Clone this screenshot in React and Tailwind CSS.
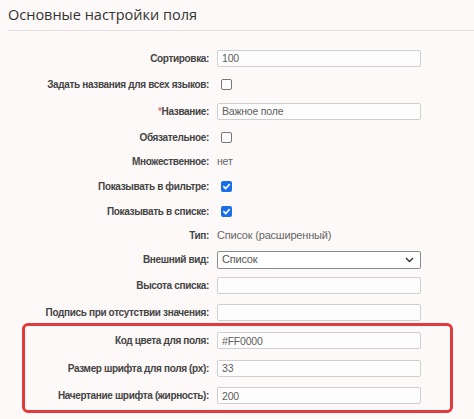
import React from "react";

const baseFont = { fontFamily: '"Liberation Sans", Arial, sans-serif' };

function TextInput({ value }) {
  return (
    <div className="w-[204px] h-[17px] border border-[#cfcfcf] bg-[#fefdfd] rounded-[2px] flex items-center pl-[4px] text-[10.5px] tracking-[-0.2px] text-[#5e5e5e] leading-none">
      {value}
    </div>
  );
}

function Checkbox({ checked }) {
  if (checked) {
    return (
      <div className="ml-[4px] w-[11px] h-[11px] rounded-[2px] bg-[#1a6ee8] flex items-center justify-center">
        <svg width="9" height="9" viewBox="0 0 10 10">
          <path d="M2 5.2 L4.2 7.3 L8.2 2.8" fill="none" stroke="white" strokeWidth="1.8" strokeLinecap="round" strokeLinejoin="round" />
        </svg>
      </div>
    );
  }
  return <div className="ml-[4px] w-[11px] h-[11px] rounded-[2px] border border-[#767676] bg-white" />;
}

function Select({ value }) {
  return (
    <div className="w-[204px] h-[18px] border border-[#8a8a8a] bg-white rounded-[2px] flex items-center justify-between pl-[4px] pr-[6px] text-[11px] tracking-[-0.2px] text-[#555] leading-none">
      <span>{value}</span>
      <svg width="9" height="6" viewBox="0 0 9 6">
        <path d="M1 1 L4.5 4.5 L8 1" fill="none" stroke="#333" strokeWidth="1.4" />
      </svg>
    </div>
  );
}

function Label({ label, required, className }) {
  return (
    <div className={className + " text-right pr-[8px] text-[10px] tracking-[-0.35px] font-bold text-[#444] whitespace-nowrap"}>
      {required && <span className="text-[#e0433c] font-normal">*</span>}
      {label}:
    </div>
  );
}

function Row({ label, required, h, children }) {
  return (
    <div className={h + " flex items-center"}>
      <Label label={label} required={required} className="w-[217px]" />
      {children}
    </div>
  );
}

function BoxRow({ label, children }) {
  return (
    <div className="h-[27.5px] flex items-center">
      <Label label={label} className="w-[192px]" />
      {children}
    </div>
  );
}

export default function App() {
  return (
    <div className="w-[474px] h-[419px] overflow-hidden bg-[#fcf9f8]" style={baseFont}>
      <div className="ml-[8px] h-[31px] border-b border-[#e6e2e1] flex items-center">
        <h1 className="text-[14.5px] text-[#333] leading-none pt-[1px]" style={{ fontFamily: '"Open Sans", sans-serif' }}>
          Основные настройки поля
        </h1>
      </div>
      <div className="pt-[14px]">
        <Row h="h-[26.5px]" label="Сортировка"><TextInput value="100" /></Row>
        <Row h="h-[26.5px]" label="Задать названия для всех языков"><Checkbox /></Row>
        <Row h="h-[26.5px]" label="Название" required><TextInput value="Важное поле" /></Row>
        <Row h="h-[25px]" label="Обязательное"><Checkbox /></Row>
        <Row h="h-[24px]" label="Множественное"><span className="text-[10.5px] tracking-[-0.2px] text-[#666]">нет</span></Row>
        <Row h="h-[25px]" label="Показывать в фильтре"><Checkbox checked /></Row>
        <Row h="h-[25px]" label="Показывать в списке"><Checkbox checked /></Row>
        <Row h="h-[24px]" label="Тип"><span className="text-[11px] tracking-[-0.2px] text-[#666]">Список (расширенный)</span></Row>
        <Row h="h-[24.5px]" label="Внешний вид"><Select value="Список" /></Row>
        <Row h="h-[27px]" label="Высота списка"><TextInput value="" /></Row>
        <Row h="h-[26px]" label="Подпись при отсутствии значения"><TextInput value="" /></Row>
        <div className="ml-[22px] w-[431px] -mt-[2px] border-[3px] border-[#e23b3b] rounded-[6px] pt-[1px]">
          <BoxRow label="Код цвета для поля"><TextInput value="#FF0000" /></BoxRow>
          <BoxRow label="Размер шрифта для поля (px)"><TextInput value="33" /></BoxRow>
          <BoxRow label="Начертание шрифта (жирность)"><TextInput value="200" /></BoxRow>
        </div>
      </div>
    </div>
  );
}
